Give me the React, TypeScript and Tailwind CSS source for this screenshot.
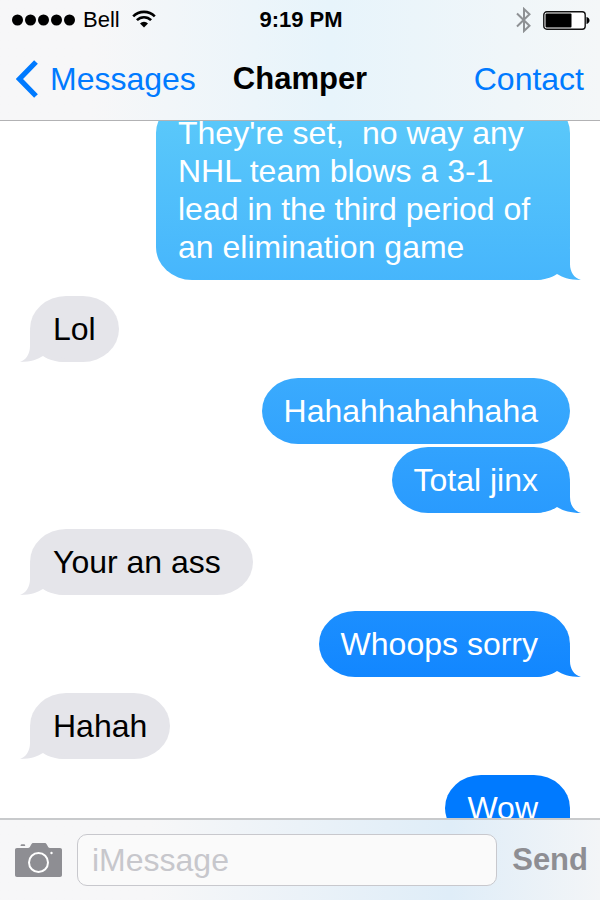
import clsx from 'clsx'

type Message = {
  id: number
  text: string
  from: 'me' | 'them'
  /** last message of a run gets the tail */
  tail: boolean
}

const messages: Message[] = [
  {
    id: 1,
    text: "They're set,  no way any NHL team blows a 3-1 lead in the third period of an elimination game",
    from: 'me',
    tail: true
  },
  { id: 2, text: 'Lol', from: 'them', tail: true },
  { id: 3, text: 'Hahahhahahhaha', from: 'me', tail: false },
  { id: 4, text: 'Total jinx', from: 'me', tail: true },
  { id: 5, text: 'Your an ass\u00a0', from: 'them', tail: true },
  { id: 6, text: 'Whoops sorry', from: 'me', tail: true },
  { id: 7, text: 'Hahah', from: 'them', tail: true },
  { id: 8, text: 'Wow', from: 'me', tail: true }
]

const StatusBar = (): JSX.Element => {
  return (
    <div className="grid h-10 grid-cols-[1fr_auto_1fr] items-center pr-[10px] pl-3 text-[22px] leading-none">
      <div className="flex items-center gap-2">
        <svg width="63" height="12" viewBox="0 0 63 12" aria-label="Signal">
          <circle cx="5.5" cy="6" r="5.5" />
          <circle cx="18.5" cy="6" r="5.5" />
          <circle cx="31.5" cy="6" r="5.5" />
          <circle cx="44.5" cy="6" r="5.5" />
          <circle cx="57.5" cy="6" r="5.5" />
        </svg>
        <span>Bell</span>
        <svg className="ml-1" width="24" height="20" viewBox="0 0 24 20" fill="none" stroke="#000" aria-label="Wi-Fi">
          <path d="M1.2 6.4a15.2 15.2 0 0 1 21.6 0" strokeWidth="2.6" />
          <path d="M4.9 10.2a10 10 0 0 1 14.2 0" strokeWidth="2.6" />
          <path d="M12 17.4 8 13.400a5.700 5.700 0 0 1 8 0z" fill="#000" stroke="none" />
        </svg>
      </div>
      <span className="font-bold">9:19 PM</span>
      <div className="flex items-center justify-end gap-3">
        <svg width="15" height="26" viewBox="0 0 15 26" fill="none" stroke="#8e9194" strokeWidth="2" aria-label="Bluetooth">
          <path d="M1 6.500 13.500 18.800l-5.500 5.200V2l5.500 5.200L1 19.500" />
        </svg>
        <svg width="47" height="19" viewBox="0 0 47 19" aria-label="Battery">
          <rect x="0.8" y="0.8" width="41.4" height="17.4" rx="3" fill="#fff" stroke="#111" strokeWidth="1.4" />
          <rect x="2.5" y="2.5" width="26" height="14" rx="1" />
          <path d="M43.500 6c2 .6 3 1.900 3 3.500s-1 2.900-3 3.500z" />
        </svg>
      </div>
    </div>
  )
}

const Bubble = ({ message }: { message: Message }): JSX.Element => {
  const mine = message.from === 'me'

  return (
    <li
      className={clsx(
        'relative max-w-23/30 rounded-[36px/33px] py-[14px] whitespace-pre-wrap',
        mine
          ? 'self-end bg-linear-to-b from-[#5ac8fa] from-13% to-[#007aff] to-86% bg-fixed pr-8 pl-[22px] text-white'
          : 'self-start bg-[#e5e5ea] px-[23px] text-black',
        message.tail ? 'mb-4' : 'mb-[3px]'
      )}
    >
      {message.text}
      {message.tail && (
        <span
          aria-hidden="true"
          className={clsx(
            'absolute -z-0 bottom-0 h-[33px] w-[50px]',
            mine
              ? "-right-[11px] bg-linear-to-b from-[#5ac8fa] from-13% to-[#007aff] to-86% bg-fixed [clip-path:path('M39_0V17C39_25_43_31_50_33C38_33_31_30_26_27C20_31_12_33_3_33V30L28_22Z')]"
              : "-left-[10px] bg-[#e5e5ea] [clip-path:path('M10_0V17C10_25_6_31_0_33C11_33_18_30_23_27C29_31_37_33_46_33V30L21_22Z')]"
          )}
        />
      )}
    </li>
  )
}

const App = (): JSX.Element => {
  return (
    <div className="flex h-screen flex-col bg-white font-['Liberation_Sans',Arial,sans-serif] text-[32px] leading-[38px] text-black">
      <header className="shrink-0 border-b border-[#b2b2b4] bg-linear-to-r from-[#f7f7f8] from-15% via-[#e7f4fb] via-55% to-[#f4f7f8]">
        <StatusBar />
        <nav className="grid h-20 grid-cols-[1fr_auto_1fr] items-center px-4 pb-0.5">
          <button type="button" className="flex items-center gap-3 justify-self-start text-[#007aff]">
            <svg width="22" height="38" viewBox="0 0 22 38" fill="none" stroke="currentColor" strokeWidth="5.2" aria-hidden="true">
              <path d="M20 2 3.500 19 20 36" />
            </svg>
            Messages
          </button>
          <h1 className="text-[31px] font-bold">Champer</h1>
          <button type="button" className="justify-self-end text-[#007aff]">
            Contact
          </button>
        </nav>
      </header>

      <main className="min-h-0 flex-1 overflow-hidden">
        {/* scrolled part way into the first message */}
        <ul className="-mt-[21px] flex flex-col px-[30px]">
          {messages.map((message) => (
            <Bubble key={message.id} message={message} />
          ))}
        </ul>
      </main>

      <form
        className="flex shrink-0 items-center gap-[15px] border-t-2 border-[#c8cacc] bg-linear-to-r from-[#f7f7f8] from-25% via-[#dfedf8] via-75% to-[#f3f5f7] py-[14px] pr-3 pl-[15px]"
        onSubmit={(e) => e.preventDefault()}
      >
        <button type="button" aria-label="Camera" className="shrink-0">
          <svg className="block" width="47" height="36" viewBox="0 0 47 36">
            <path
              fill="#8e8e93"
              d="M2 6h11c1.500 0 2-1.200 2.800-2.800C16.600 1.500 17.300 1 18.500 1h11c1.200 0 2 .5 2.700 2.200C33 4.800 33.500 6 35 6h10c1.300 0 2 .7 2 2v25c0 1.300-.7 2-2 2H2c-1.300 0-2-.7-2-2V8c0-1.300.7-2 2-2z"
            />
            <path fill="#8e8e93" d="M6.500 2.300h2.800c.6 0 .9.800.9 1.700H5.600c0-1 .3-1.700.9-1.700z" />
            <circle cx="23.500" cy="20.500" r="9.500" fill="none" stroke="#fff" strokeWidth="2" />
            <circle cx="36.500" cy="11" r="1.200" fill="#fff" />
          </svg>
        </button>
        <input
          type="text"
          aria-label="iMessage"
          placeholder="iMessage"
          className="h-[52px] min-w-0 flex-1 rounded-[10px] border border-[#c8c8cd] bg-[#fafafa] px-[14px] placeholder:text-[#c7c7cc] focus:outline-none"
        />
        <button type="submit" className="shrink-0 text-[31px] font-bold text-[#8e8e93]">
          Send
        </button>
      </form>
    </div>
  )
}

export default App
